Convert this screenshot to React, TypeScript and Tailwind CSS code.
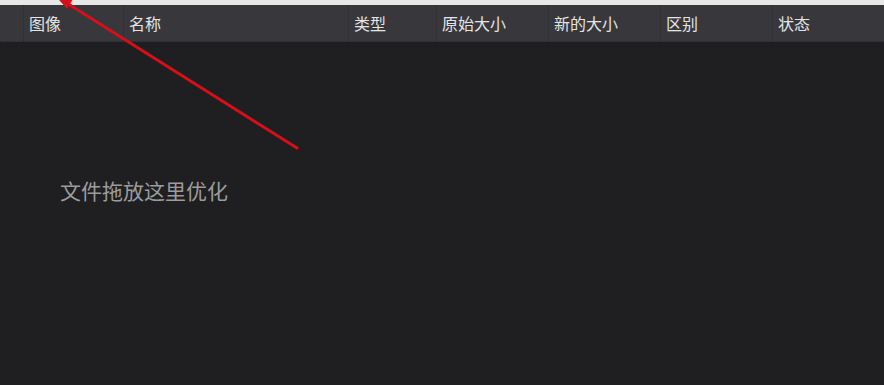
import React from "react";

const cols = [
  { w: "w-[23px]", label: "" },
  { w: "w-[100px]", label: "图像" },
  { w: "w-[225px]", label: "名称" },
  { w: "w-[88px]", label: "类型" },
  { w: "w-[112px]", label: "原始大小" },
  { w: "w-[112px]", label: "新的大小" },
  { w: "w-[112px]", label: "区别" },
  { w: "flex-1", label: "状态" },
];

export default function App() {
  return (
    <div
      className="relative w-[884px] h-[385px] overflow-hidden bg-[#1f1f21] flex flex-col"
      style={{ fontFamily: '"Noto Sans CJK SC", "Noto Sans", sans-serif' }}
    >
      <div className="h-[5px] bg-[#e8e8e8] shrink-0" />
      <div className="h-[37px] shrink-0 flex bg-[#38373c] border-b border-dotted border-[#2a292d]">
        {cols.map((c, i) => (
          <div
            key={i}
            className={`${c.w} shrink-0 h-full flex items-center pl-[5px] text-[16px] leading-none text-[#e4e4e4] ${
              i > 0 ? "border-l border-dotted border-[#2c2b30]" : ""
            }`}
          >
            {c.label}
          </div>
        ))}
      </div>
      <div className="flex-1 relative">
        <div className="pl-[60px] pt-[138px] text-[21px] leading-none text-[#9c9c9c]">
          文件拖放这里优化
        </div>
      </div>
      <svg
        className="absolute left-0 top-0 pointer-events-none"
        width="884"
        height="385"
        viewBox="0 0 884 385"
      >
        <line x1="297" y1="148" x2="70" y2="5" stroke="#d41018" strokeWidth="3" strokeLinecap="round" />
        <polygon points="53,-7 73,-1 67,9" fill="#d41018" />
      </svg>
    </div>
  );
}
